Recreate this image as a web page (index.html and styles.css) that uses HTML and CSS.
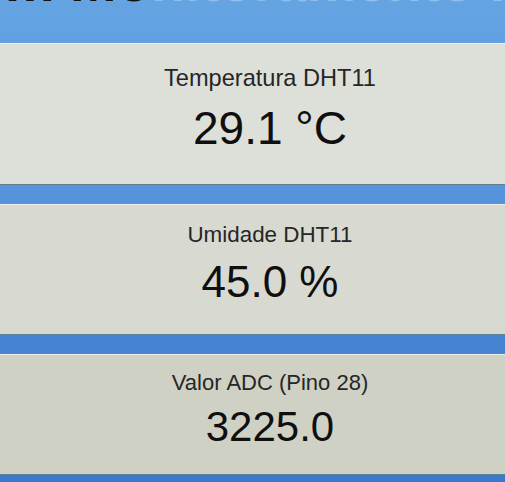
FILE: index.html
```html
<!DOCTYPE html>
<html lang="pt-BR">
<head>
<meta charset="utf-8">
<title>Monitoramento</title>
<link rel="stylesheet" href="styles.css">
</head>
<body>
  <header class="header">
    <h1 class="title"><span class="title-dark">Sistema com Mo</span><span class="title-light">nitoramento IoT</span></h1>
  </header>
  <main class="cards">
    <section class="card card-temp">
      <div class="label">Temperatura DHT11</div>
      <div class="value">29.1 °C</div>
    </section>
    <section class="card card-hum">
      <div class="label">Umidade DHT11</div>
      <div class="value">45.0 %</div>
    </section>
    <section class="card card-adc">
      <div class="label">Valor ADC (Pino 28)</div>
      <div class="value">3225.0</div>
    </section>
  </main>
</body>
</html>
```

FILE: styles.css
```css
html, body {
  margin: 0;
  padding: 0;
}

body {
  width: 505px;
  height: 482px;
  overflow: hidden;
  font-family: "Liberation Sans", Arial, sans-serif;
  background: linear-gradient(to bottom, #65a4e3 0%, #5a98dd 30%, #4a88d6 60%, #3b78cc 100%);
}

.header {
  height: 43px;
  overflow: hidden;
}

.title {
  margin: -46px 0 0 -291px;
  font-size: 56px;
  line-height: 56px;
  font-weight: bold;
  white-space: nowrap;
}

.title-dark {
  color: #111;
}

.title-light {
  color: #8ebeec;
}

.cards {
  display: flex;
  flex-direction: column;
  gap: 20px;
}

.card {
  display: flex;
  flex-direction: column;
  align-items: center;
  padding-left: 35px;
  border-top: 1px solid #eef0ea;
  box-shadow: 0 1px 0 #5d7f8f;
  color: #141414;
}

.label {
  font-size: 22px;
  line-height: 26px;
  color: #262626;
}

.value {
  color: #0f0f0f;
}

.card-temp {
  background: #dde0d9;
  padding-top: 21px;
  padding-bottom: 30px;
  gap: 11px;
}

.card-temp .label {
  font-size: 23.6px;
}

.card-temp .value {
  font-size: 46px;
  line-height: 52px;
}

.card-hum {
  background: #d8dad1;
  padding-top: 17px;
  padding-bottom: 27px;
  gap: 9px;
}

.card-hum .label {
  font-size: 22.4px;
}

.card-hum .value {
  font-size: 44px;
  line-height: 50px;
}

.card-adc {
  background: #cfd1c5;
  padding-top: 15px;
  padding-bottom: 23px;
  gap: 7px;
}

.card-adc .value {
  font-size: 42px;
  line-height: 48px;
}
```
